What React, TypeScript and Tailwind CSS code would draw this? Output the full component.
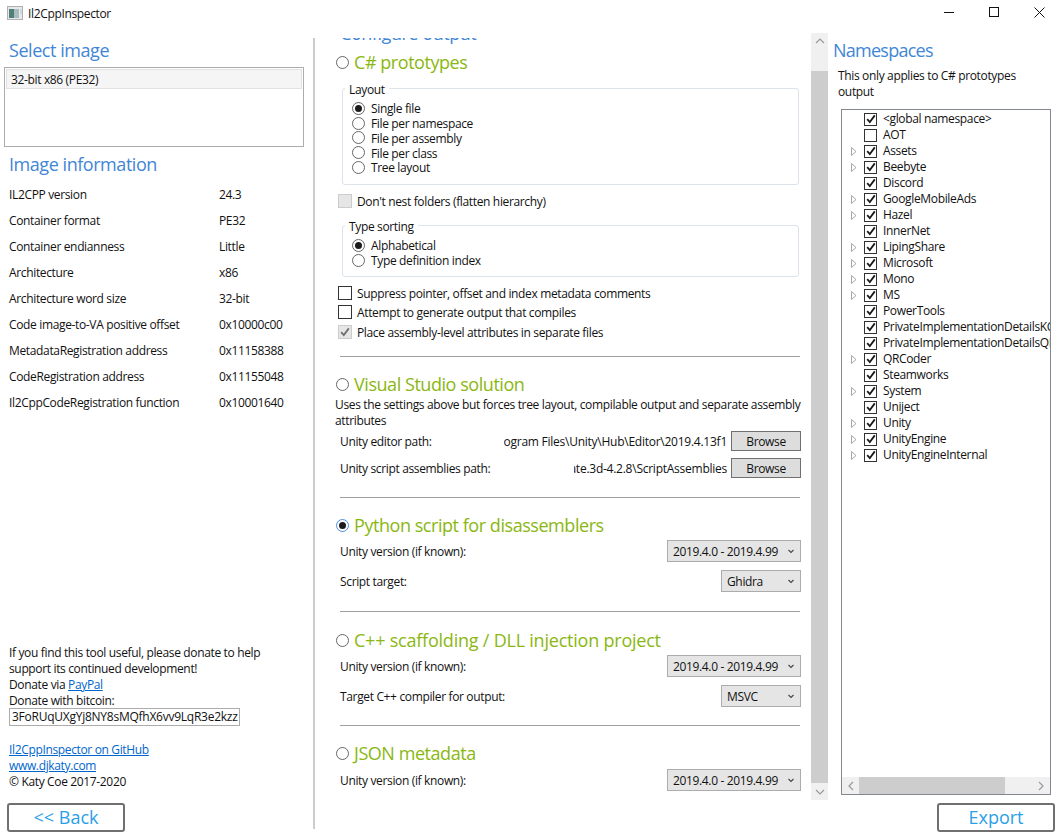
const F = '[font-family:"Open_Sans",sans-serif]';
const TX = "pt-[2px]";
const H = "text-[18px] leading-[24px] tracking-[-0.45px] text-[#3f86d6]";

function Radio({ on, blue }: { on?: boolean; blue?: boolean }) {
  return (
    <span className={`flex h-[13px] w-[13px] shrink-0 items-center justify-center rounded-full border bg-white ${blue ? "border-[#4f8fdc]" : "border-[#666666]"}`}>
      {on && <span className="h-[7px] w-[7px] rounded-full bg-[#1c1c1c]" />}
    </span>
  );
}

function Check({ on, disabled, size = 14 }: { on?: boolean; disabled?: boolean; size?: number }) {
  const cls = size === 14 ? "h-[14px] w-[14px]" : "h-[13px] w-[13px]";
  return (
    <span className={`flex ${cls} shrink-0 items-center justify-center border ${disabled ? "border-[#cccccc] bg-[#e6e6e6]" : "border-[#333333] bg-white"}`}>
      {on && (
        <svg width="10" height="10" viewBox="0 0 10 10">
          <path d="M1.2 5.2 L3.8 8 L8.8 1.4" fill="none" stroke={disabled ? "#707070" : "#1a1a1a"} strokeWidth="1.8" />
        </svg>
      )}
    </span>
  );
}

function OptRow({ label, on }: { label: string; on?: boolean }) {
  return (
    <div className="flex h-[14.75px] items-center gap-[6px] pl-[9px]">
      <Radio on={on} />
      <span className={TX}>{label}</span>
    </div>
  );
}

function CheckRow({ label, on, disabled, className }: { label: string; on?: boolean; disabled?: boolean; className: string }) {
  return (
    <div className={`ml-[23px] flex h-[14px] items-center gap-[5px] ${className}`}>
      <Check on={on} disabled={disabled} />
      <span className={TX}>{label}</span>
    </div>
  );
}

function Group({ title, className, children }: { title: string; className: string; children: React.ReactNode }) {
  return (
    <div className={`relative ml-[27px] w-[457px] rounded-[3px] border border-[#dce3ea] pt-[12px] ${className}`}>
      <span className="absolute -top-[8px] left-[2px] bg-white px-[4px] pt-px leading-[16px]">{title}</span>
      {children}
    </div>
  );
}

function Head({ label, on, className, track = "tracking-[-0.45px]" }: { label: string; on?: boolean; className: string; track?: string }) {
  return (
    <div className={`ml-[21px] flex h-[24px] items-center gap-[5px] ${className}`}>
      <Radio on={on} blue={on} />
      <span className={`text-[18px] text-[#8ab711] ${track}`}>{label}</span>
    </div>
  );
}

function Sep({ className }: { className: string }) {
  return <div className={`ml-[25px] h-px w-[460px] bg-[#a0a0a0] ${className}`} />;
}

function Sel({ value, w }: { value: string; w: string }) {
  return (
    <div className={`flex h-[22px] ${w} items-center justify-between border border-[#acacac] bg-[#e5e5e5] pl-[5px] pr-[6px]`}>
      <span className={TX}>{value}</span>
      <svg width="6" height="5" viewBox="0 0 6 5">
        <path d="M0.5 1 L3 3.5 L5.5 1" fill="none" stroke="#444444" strokeWidth="1.1" />
      </svg>
    </div>
  );
}

function SelRow({ label, value, w, className }: { label: string; value: string; w: string; className: string }) {
  return (
    <div className={`ml-[25px] flex w-[461px] items-center justify-between ${className}`}>
      <span className={TX}>{label}</span>
      <Sel value={value} w={w} />
    </div>
  );
}

function PathRow({ label, path, clip, className }: { label: string; path: string; clip: string; className: string }) {
  return (
    <div className={`ml-[25px] flex h-[20px] w-[461px] items-center ${className}`}>
      <span className={`flex-1 ${TX}`}>{label}</span>
      <div className={`mr-[4px] flex ${clip} justify-end overflow-hidden whitespace-nowrap ${TX}`}>
        <span className="tracking-[-0.25px]">{path}</span>
      </div>
      <div className={`flex h-[20px] w-[70px] items-center justify-center border border-[#707070] bg-[#dddddd] ${TX}`}>Browse</div>
    </div>
  );
}

const info = [
  ["IL2CPP version", "24.3"],
  ["Container format", "PE32"],
  ["Container endianness", "Little"],
  ["Architecture", "x86"],
  ["Architecture word size", "32-bit"],
  ["Code image-to-VA positive offset", "0x10000c00"],
  ["MetadataRegistration address", "0x11158388"],
  ["CodeRegistration address", "0x11155048"],
  ["Il2CppCodeRegistration function", "0x10001640"],
];

const tree: [string, boolean, boolean][] = [
  ["<global namespace>", false, true],
  ["AOT", false, false],
  ["Assets", true, true],
  ["Beebyte", true, true],
  ["Discord", false, true],
  ["GoogleMobileAds", true, true],
  ["Hazel", true, true],
  ["InnerNet", false, true],
  ["LipingShare", true, true],
  ["Microsoft", true, true],
  ["Mono", true, true],
  ["MS", true, true],
  ["PowerTools", false, true],
  ["PrivateImplementationDetailsKCP", false, true],
  ["PrivateImplementationDetailsQRCoder", false, true],
  ["QRCoder", true, true],
  ["Steamworks", false, true],
  ["System", true, true],
  ["Uniject", false, true],
  ["Unity", true, true],
  ["UnityEngine", true, true],
  ["UnityEngineInternal", true, true],
];

function Chevron({ d }: { d: string }) {
  return (
    <svg width="10" height="10" viewBox="0 0 10 10">
      <path d={d} fill="none" stroke="#9a9a9a" strokeWidth="1.2" />
    </svg>
  );
}

export default function App() {
  return (
    <div className={`flex h-[836px] w-[1061px] flex-col overflow-hidden bg-white text-[12px] tracking-[-0.35px] text-[#111111] ${F}`}>
      {/* title bar */}
      <div className="flex h-[33px] shrink-0">
        <div className="flex h-[26px] flex-1 items-center pl-[7px]">
          <svg width="16" height="14" viewBox="0 0 16 14">
            <rect x="0.5" y="0.5" width="15" height="13" fill="#e8e8e8" stroke="#b0b0b0" />
            <rect x="2" y="3" width="5" height="9" fill="#4f7f78" />
            <rect x="7" y="3" width="5" height="9" fill="#a8bcc0" />
            <rect x="13" y="3" width="2" height="5" fill="#d0d8dc" />
          </svg>
          <span className={`ml-[5px] ${TX}`}>Il2CppInspector</span>
        </div>
        <div className="mr-[16px] flex h-[26px] gap-[34px] pt-[7px]">
          <svg width="11" height="11" viewBox="0 0 11 11"><path d="M0 5.5 H10" stroke="#111111" /></svg>
          <svg width="11" height="11" viewBox="0 0 11 11"><rect x="0.5" y="0.5" width="9" height="9" fill="none" stroke="#111111" /></svg>
          <svg width="11" height="11" viewBox="0 0 11 11"><path d="M0.5 0.5 L10.5 10.5 M10.5 0.5 L0.5 10.5" stroke="#111111" /></svg>
        </div>
      </div>

      <div className="flex min-h-0 flex-1">
        {/* left */}
        <div className="flex w-[313px] shrink-0 flex-col pb-[4px]">
          <div className={`ml-[9px] mt-[5px] ${H}`}>Select image</div>
          <div className="ml-[4px] mt-[5px] h-[80px] w-[300px] border border-[#acacac] p-px">
            <div className="flex h-[20px] items-center border border-[#e2e2e2] bg-[#f5f5f5] pl-[4px]"><span className={TX}>32-bit x86 (PE32)</span></div>
          </div>
          <div className={`ml-[9px] mt-[5px] ${H}`}>Image information</div>
          <div className="ml-[9px] mt-[5px] grid grid-cols-[210px_1fr]">
            {info.map(([k, v]) => (
              <div key={k} className="col-span-2 grid h-[26px] grid-cols-subgrid items-center">
                <span className={TX}>{k}</span>
                <span className={TX}>{v}</span>
              </div>
            ))}
          </div>
          <div className="ml-[9px] mt-auto w-[290px] leading-[16px]">
            <div>If you find this tool useful, please donate to help</div>
            <div>support its continued development!</div>
            <div>Donate via <a className="text-[#0066cc] underline">PayPal</a></div>
            <div>Donate with bitcoin:</div>
            <div className="mt-[-1px] flex h-[18px] w-[231px] items-center overflow-hidden whitespace-nowrap border border-[#acacac] pl-[2px] tracking-[-0.25px]">3FoRUqUXgYj8NY8sMQfhX6vv9LqR3e2kzz</div>
            <div className="mt-[16px] text-[#0066cc] underline">Il2CppInspector on GitHub</div>
            <div className="text-[#0066cc] underline">www.djkaty.com</div>
            <div>© Katy Coe 2017-2020</div>
          </div>
          <div className="ml-[7px] mt-[13px] flex h-[29px] w-[118px] items-center justify-center rounded-[3px] border-2 border-[#707070] text-[18px] tracking-normal text-[#2a9fe8]">&lt;&lt; Back</div>
        </div>
        <div className="mb-[7px] mt-[5px] w-[2px] shrink-0 bg-[#cccccc]" />

        {/* middle */}
        <div className="mt-[5px] h-[762px] w-[496px] shrink-0 overflow-hidden">
          <div className={`ml-[25px] mt-[-17px] h-[23px] ${H}`}>Configure output</div>
          <Head label="C# prototypes" className="mt-[6px]" />
          <Group title="Layout" className="mt-[14px] h-[97px]">
            <OptRow label="Single file" on />
            <OptRow label="File per namespace" />
            <OptRow label="File per assembly" />
            <OptRow label="File per class" />
            <OptRow label="Tree layout" />
          </Group>
          <CheckRow label="Don't nest folders (flatten hierarchy)" disabled className="mt-[9px]" />
          <Group title="Type sorting" className="mt-[17px] h-[52px]">
            <OptRow label="Alphabetical" on />
            <OptRow label="Type definition index" />
          </Group>
          <CheckRow label="Suppress pointer, offset and index metadata comments" className="mt-[9px]" />
          <CheckRow label="Attempt to generate output that compiles" className="mt-[5px]" />
          <CheckRow label="Place assembly-level attributes in separate files" on disabled className="mt-[6px]" />
          <Sep className="mt-[17px]" />

          <Head label="Visual Studio solution" className="mt-[15px]" />
          <div className="ml-[20px] mt-px w-[476px] leading-[16px]">Uses the settings above but forces tree layout, compilable output and separate assembly attributes</div>
          <PathRow label="Unity editor path:" path="C:\Program Files\Unity\Hub\Editor\2019.4.13f1" clip="w-[223px]" className="mt-[2px]" />
          <PathRow label="Unity script assemblies path:" path="com.unity.template.3d-4.2.8\ScriptAssemblies" clip="w-[153px]" className="mt-[7px]" />
          <Sep className="mt-[19px]" />

          <Head label="Python script for disassemblers" on className="mt-[15px]" />
          <SelRow label="Unity version (if known):" value="2019.4.0 - 2019.4.99" w="w-[134px]" className="mt-[3px]" />
          <SelRow label="Script target:" value="Ghidra" w="w-[80px]" className="mt-[8px]" />
          <Sep className="mt-[19px]" />

          <Head label="C++ scaffolding / DLL injection project" track="tracking-[-0.22px]" className="mt-[16px]" />
          <SelRow label="Unity version (if known):" value="2019.4.0 - 2019.4.99" w="w-[134px]" className="mt-[3px]" />
          <SelRow label="Target C++ compiler for output:" value="MSVC" w="w-[80px]" className="mt-[8px]" />
          <Sep className="mt-[18px]" />

          <Head label="JSON metadata" className="mt-[15px]" />
          <SelRow label="Unity version (if known):" value="2019.4.0 - 2019.4.99" w="w-[134px]" className="mt-[4px]" />
        </div>

        {/* main scrollbar */}
        <div className="flex h-[767px] w-[17px] shrink-0 flex-col bg-[#f0f0f0]">
          <div className="flex h-[38px] justify-center pt-[3px]"><Chevron d="M1 7 L5 3 L9 7" /></div>
          <div className="flex-1 bg-[#cdcdcd]" />
          <div className="flex h-[17px] items-center justify-center"><Chevron d="M1 3 L5 7 L9 3" /></div>
        </div>

        {/* right */}
        <div className="flex min-w-0 flex-1 flex-col pb-[4px]">
          <div className={`ml-[5px] mt-[5px] ${H} tracking-[-0.75px]`}>Namespaces</div>
          <div className="ml-[10px] mt-[6px] w-[200px] leading-[16px]">This only applies to C# prototypes output</div>
          <div className="ml-[13px] mt-[9px] flex h-[686px] w-[210px] flex-col overflow-hidden border border-[#828790]">
            <div className="flex-1 overflow-hidden pt-px">
              {tree.map(([n, arrow, on]) => (
                <div key={n} className="flex h-[16px] items-center whitespace-nowrap pl-[9px]">
                  <span className="flex w-[13px] shrink-0 justify-start">
                    {arrow && (
                      <svg width="6" height="9" viewBox="0 0 6 9"><path d="M0.5 0.5 L5 4.5 L0.5 8.5 Z" fill="#ffffff" stroke="#a6a6a6" /></svg>
                    )}
                  </span>
                  <Check on={on} size={13} />
                  <span className="ml-[6px] shrink-0">{n}</span>
                </div>
              ))}
            </div>
            <div className="flex h-[17px] shrink-0 bg-[#f0f0f0]">
              <div className="flex w-[17px] items-center justify-center"><Chevron d="M7 1 L3 5 L7 9" /></div>
              <div className="w-[146px] bg-[#cdcdcd]" />
              <div className="flex flex-1 items-center justify-end pr-[4px]"><Chevron d="M3 1 L7 5 L3 9" /></div>
            </div>
          </div>
          <div className="ml-[109px] mt-auto flex h-[29px] w-[118px] items-center justify-center rounded-[3px] border-2 border-[#707070] text-[18px] tracking-normal text-[#2a9fe8]">Export</div>
        </div>
      </div>
    </div>
  );
}
